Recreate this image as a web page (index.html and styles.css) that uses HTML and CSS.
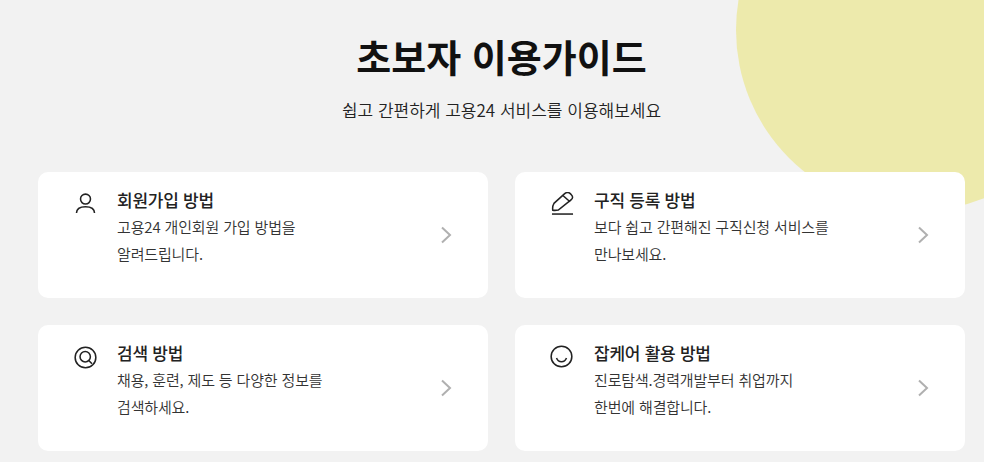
FILE: index.html
```html
<!DOCTYPE html>
<html lang="ko">
<head>
<meta charset="utf-8">
<title>초보자 이용가이드</title>
<link rel="stylesheet" href="styles.css">
</head>
<body>
<div class="page">
  <div class="circle"></div>
  <header class="head">
    <h1 class="title">초보자 이용가이드</h1>
    <p class="sub">쉽고 간편하게 고용24 서비스를 이용해보세요</p>
  </header>
  <div class="grid">
    <a class="card">
      <svg class="icon" viewBox="0 0 24 24"><circle cx="12" cy="7.400" r="5.200"/><path d="M2.600 22c0-4.500 4-6.700 9.400-6.700s9.400 2.200 9.400 6.700"/></svg>
      <div class="body">
        <h2 class="name">회원가입 방법</h2>
        <p class="desc">고용24 개인회원 가입 방법을<br>알려드립니다.</p>
      </div>
      <svg class="arrow" viewBox="0 0 12 18"><path d="M2 1.500 10 9l-8 7.500"/></svg>
    </a>
    <a class="card">
      <svg class="icon" viewBox="0 0 24 24"><path d="M1.800 19C1.500 16 2 13.500 3.100 11.800L14 2c2-1.800 4.600-1.800 6.400 0l.8.8c1.800 1.800 1.700 3.800 0 5.200L7.600 18.800c-2 .4-4 .5-5.800.2z"/><path d="m12.400 3.600 7.400 6.600"/><path d="M1 23h22"/></svg>
      <div class="body">
        <h2 class="name">구직 등록 방법</h2>
        <p class="desc">보다 쉽고 간편해진 구직신청 서비스를<br>만나보세요.</p>
      </div>
      <svg class="arrow" viewBox="0 0 12 18"><path d="M2 1.500 10 9l-8 7.500"/></svg>
    </a>
    <a class="card">
      <svg class="icon icon-low" viewBox="0 0 24 24"><circle cx="12" cy="12" r="10.800"/><circle cx="11.700" cy="11.200" r="5.400"/><path d="m15.400 15.200 3.400 3.400"/></svg>
      <div class="body">
        <h2 class="name">검색 방법</h2>
        <p class="desc">채용, 훈련, 제도 등 다양한 정보를<br>검색하세요.</p>
      </div>
      <svg class="arrow" viewBox="0 0 12 18"><path d="M2 1.500 10 9l-8 7.500"/></svg>
    </a>
    <a class="card">
      <svg class="icon icon-left" viewBox="0 0 24 24"><circle cx="12" cy="12" r="10.800"/><path d="M6.800 13.600c1 2.600 3 3.900 5.200 3.900s4.200-1.300 5.200-3.900"/></svg>
      <div class="body">
        <h2 class="name">잡케어 활용 방법</h2>
        <p class="desc">진로탐색.경력개발부터 취업까지<br>한번에 해결합니다.</p>
      </div>
      <svg class="arrow" viewBox="0 0 12 18"><path d="M2 1.500 10 9l-8 7.500"/></svg>
    </a>
  </div>
</div>
</body>
</html>
```
FILE: styles.css
```css
* { box-sizing: border-box; }
html, body { margin: 0; height: 100%; }
body {
  background: #f2f2f2;
  font-family: "Noto Sans CJK KR", "Noto Sans", sans-serif;
  color: #111;
  overflow: hidden;
}
.page { position: relative; height: 462px; overflow: hidden; padding: 0 19px 0 38px; }
.circle {
  position: absolute;
  left: 736px;
  top: -151px;
  width: 362px;
  height: 362px;
  border-radius: 50%;
  background: #edeaac;
}
.head { position: relative; text-align: center; padding-top: 28px; height: 172px; width: 927px; }
.title { margin: 0; font-size: 38px; line-height: 56px; font-weight: 700; color: #111; }
.sub { margin: 14px 0 0; font-size: 17px; line-height: 24px; font-weight: 350; color: #222; }
.grid {
  position: relative;
  display: grid;
  grid-template-columns: 450px 450px;
  grid-auto-rows: 126px;
  column-gap: 27px;
  row-gap: 27px;
}
.card {
  display: flex;
  align-items: flex-start;
  background: #fff;
  border-radius: 10px;
  padding: 16px 0 0 36px;
  position: relative;
}
.icon {
  width: 23px;
  height: 23px;
  margin-top: 4px;
  flex: none;
  fill: none;
  stroke: #222;
  stroke-width: 1.600;
}
.icon-low { margin-top: 5px; }
.icon-left { margin-left: -1px; margin-right: 1px; }
.body { margin-left: 20px; }
.name { margin: 0 0 1px; font-size: 17px; line-height: 24px; font-weight: 500; letter-spacing: -0.25px; color: #222; }
.desc { margin: 0; font-size: 15px; line-height: 27px; font-weight: 350; letter-spacing: -0.15px; color: #333; }
.arrow {
  position: absolute;
  right: 36px;
  top: 54px;
  width: 12px;
  height: 18px;
  fill: none;
  stroke: #b0b0b0;
  stroke-width: 2;
}
```
